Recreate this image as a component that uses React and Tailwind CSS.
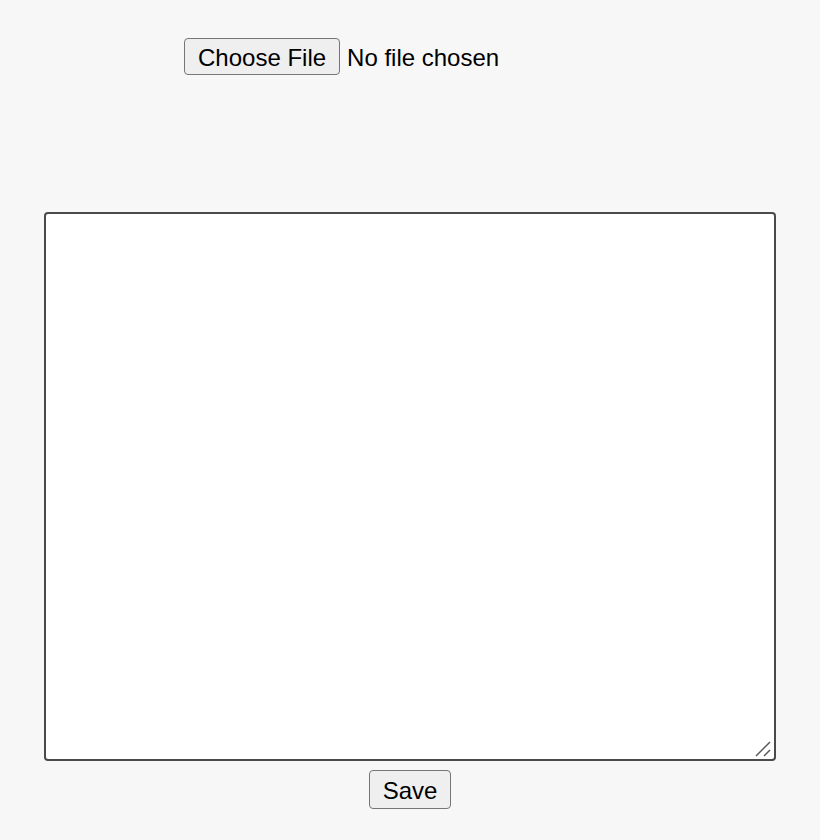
export default function App() {
  return (
    <div
      className="min-h-[840px] w-full bg-[#f7f7f7] text-black"
      style={{ fontFamily: '"Liberation Sans", Arial, sans-serif' }}
    >
      <div className="flex items-center pl-[184px] pt-[38px]">
        <button className="h-[37px] rounded-[4px] border-[1.5px] border-[#767676] bg-[#efefef] px-[13px] pt-[2px] text-[24px] leading-none">
          Choose File
        </button>
        <span className="ml-[7px] pt-[3px] text-[24px] leading-none">No file chosen</span>
      </div>
      <div className="mt-[137px] flex flex-col items-center">
        <div className="relative">
          <textarea className="block h-[549px] w-[732px] resize-none rounded-[4px] border-2 border-[#4a4a4a] bg-white outline-none" />
          <svg
            className="pointer-events-none absolute bottom-[3px] right-[3px]"
            width="18"
            height="18"
            viewBox="0 0 18 18"
          >
            <line x1="1" y1="16" x2="15" y2="2" stroke="#555" strokeWidth="1.5" />
            <line x1="9" y1="16" x2="15" y2="10" stroke="#555" strokeWidth="1.5" />
          </svg>
        </div>
        <button className="mt-[9px] h-[39px] w-[82px] rounded-[4px] border-[1.5px] border-[#767676] bg-[#efefef] pt-[2px] text-[24px] leading-none">
          Save
        </button>
      </div>
    </div>
  );
}
